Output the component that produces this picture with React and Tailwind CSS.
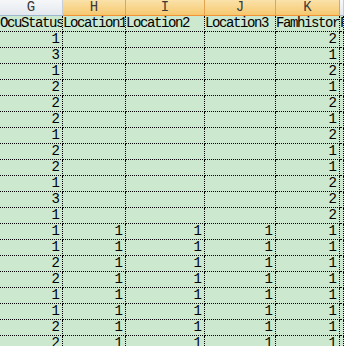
import React from "react";

const rows = [
  ["1", "", "", "", "2"],
  ["3", "", "", "", "1"],
  ["1", "", "", "", "2"],
  ["2", "", "", "", "1"],
  ["2", "", "", "", "2"],
  ["2", "", "", "", "1"],
  ["1", "", "", "", "2"],
  ["2", "", "", "", "1"],
  ["2", "", "", "", "1"],
  ["1", "", "", "", "2"],
  ["3", "", "", "", "2"],
  ["1", "", "", "", "2"],
  ["1", "1", "1", "1", "1"],
  ["1", "1", "1", "1", "1"],
  ["2", "1", "1", "1", "1"],
  ["2", "1", "1", "1", "1"],
  ["1", "1", "1", "1", "1"],
  ["1", "1", "1", "1", "1"],
  ["2", "1", "1", "1", "1"],
  ["2", "1", "1", "1", "1"],
];

const labels = ["OcuStatus", "Location1", "Location2", "Location3", "Famhistor", "Fam"];
const heads = ["G", "H", "I", "J", "K", ""];

const font = { fontFamily: '"Liberation Mono", monospace' };

export default function App() {
  return (
    <div
      className="w-[344px] h-[346px] overflow-hidden bg-[#cce8cf] text-black"
      style={font}
    >
      <div className="grid grid-cols-[63px_63px_79px_71px_64px_1fr]">
        {heads.map((h, i) => (
          <div
            key={"h" + i}
            className={
              i === 0 || i === 5
                ? "h-4 flex items-center justify-center text-[14px] font-normal text-[#3a3a3a] bg-gradient-to-b from-[#f6f7f9] to-[#e3e8ee] border-r border-b border-r-[#c5cdd8] border-b-[#9eb6ce]"
                : "h-4 flex items-center justify-center text-[14px] font-normal text-[#3a3a3a] bg-gradient-to-b from-[#fae2a9] to-[#f6c86e] border-r border-b border-r-[#e4a34e] border-b-[#f29436]"
            }
          >
            {h}
          </div>
        ))}
        {labels.map((l, i) => (
          <div
            key={"l" + i}
            className="h-4 overflow-hidden whitespace-nowrap border-r border-b border-dotted border-black text-[14px] leading-[15px] tracking-[-1.4px]"
          >
            {l}
          </div>
        ))}
        {rows.map((r, ri) =>
          [...r, ""].map((v, ci) => (
            <div
              key={ri + "-" + ci}
              className="h-4 overflow-hidden whitespace-nowrap border-r border-b border-dotted border-black text-[14px] leading-[15px] text-right pr-[2px]"
            >
              {v}
            </div>
          ))
        )}
      </div>
    </div>
  );
}
